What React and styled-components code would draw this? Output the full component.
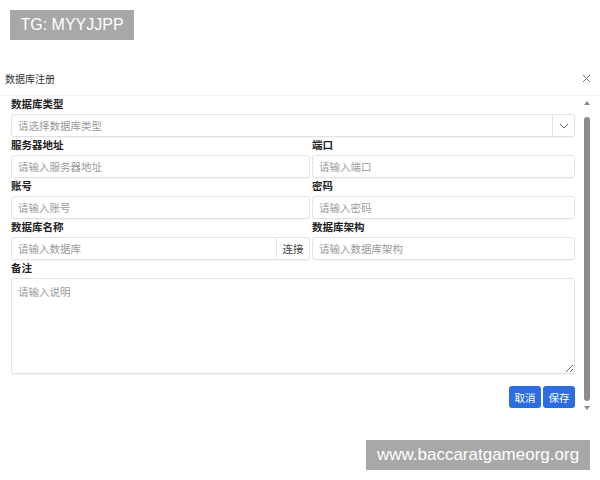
import styled, { createGlobalStyle } from "styled-components";

const GlobalStyle = createGlobalStyle`
    * { box-sizing: border-box; }
    body {
        margin: 0;
        background: #ffffff;
        font-family: "Liberation Sans", "Noto Sans CJK SC", sans-serif;
    }
`;

const cjk = `"Liberation Sans", "Noto Sans CJK SC", sans-serif`;

const fields = [
    [
        { label: "服务器地址", placeholder: "请输入服务器地址" },
        { label: "端口", placeholder: "请输入端口" },
    ],
    [
        { label: "账号", placeholder: "请输入账号" },
        { label: "密码", placeholder: "请输入密码" },
    ],
];

const App = () => {
    return (
        <Page>
            <GlobalStyle />
            <Badge top="10px" left="10px" width="124px">TG: MYYJJPP</Badge>
            <Dialog>
                <Header>
                    <Title>数据库注册</Title>
                    <Close>
                        <svg width="9" height="9" viewBox="0 0 9 9">
                            <path d="M1 1 L8 8 M8 1 L1 8" stroke="#666" strokeWidth="0.9" />
                        </svg>
                    </Close>
                </Header>
                <Body>
                    <Content>
                        <Group>
                            <Label>数据库类型</Label>
                            <SelectBox>
                                <SelectText>请选择数据库类型</SelectText>
                                <Chevron>
                                    <svg width="10" height="6" viewBox="0 0 10 6">
                                        <path d="M1 1 L5 5 L9 1" stroke="#666" strokeWidth="1" fill="none" />
                                    </svg>
                                </Chevron>
                            </SelectBox>
                        </Group>
                        {fields.map((row, i) => (
                            <Row key={i}>
                                {row.map((f) => (
                                    <Group key={f.label}>
                                        <Label>{f.label}</Label>
                                        <Input placeholder={f.placeholder} />
                                    </Group>
                                ))}
                            </Row>
                        ))}
                        <Row>
                            <Group>
                                <Label>数据库名称</Label>
                                <InputGroup>
                                    <GroupInput placeholder="请输入数据库" />
                                    <AddonBtn>连接</AddonBtn>
                                </InputGroup>
                            </Group>
                            <Group>
                                <Label>数据库架构</Label>
                                <Input placeholder="请输入数据库架构" />
                            </Group>
                        </Row>
                        <Group>
                            <Label>备注</Label>
                            <TextArea placeholder="请输入说明" />
                        </Group>
                        <Footer>
                            <Btn>取消</Btn>
                            <Btn>保存</Btn>
                        </Footer>
                    </Content>
                    <ScrollBar>
                        <Arrow up />
                        <Thumb />
                        <Arrow />
                    </ScrollBar>
                </Body>
            </Dialog>
            <Badge top="440px" left="366px" width="224px" fontSize="17px">www.baccaratgameorg.org</Badge>
        </Page>
    );
};

const Page = styled.div`
    position: relative;
    width: 600px;
    height: 480px;
    overflow: hidden;
    background: #fff;
`;

const Badge = styled.div`
    position: absolute;
    top: ${(p) => p.top};
    left: ${(p) => p.left};
    width: ${(p) => p.width};
    height: 30px;
    background: #a8a8a8;
    color: #fff;
    font-family: "Liberation Sans", sans-serif;
    font-size: ${(p) => p.fontSize || "16px"};
    display: flex;
    align-items: center;
    justify-content: center;
`;

const Dialog = styled.div`
    padding-top: 61px;
    display: flex;
    flex-direction: column;
`;

const Header = styled.div`
    height: 35px;
    padding: 0 8px 0 5px;
    display: flex;
    align-items: center;
    justify-content: space-between;
    border-bottom: 1px solid #f3f3f3;
`;

const Title = styled.div`
    font-family: ${cjk};
    font-size: 10px;
    color: #333;
`;

const Close = styled.div`
    width: 12px;
    height: 12px;
    display: flex;
    align-items: center;
    justify-content: center;
`;

const Body = styled.div`
    display: flex;
    padding: 0 6px 0 11px;
    gap: 5px;
    height: 318px;
`;

const Content = styled.div`
    width: 564px;
    display: flex;
    flex-direction: column;
`;

const Row = styled.div`
    display: grid;
    grid-template-columns: 299px 1fr;
    gap: 2px;
`;

const Group = styled.div`
    display: flex;
    flex-direction: column;
    min-width: 0;
`;

const Label = styled.div`
    height: 15px;
    line-height: 15px;
    margin: 1px 0 2px;
    font-family: ${cjk};
    font-size: 10.5px;
    font-weight: bold;
    color: #222;
`;

const fieldBase = `
    height: 23px;
    border: 1px solid #e3e3e3;
    border-radius: 3px;
    background: #fff;
    font-family: ${cjk};
    font-size: 10.5px;
    color: #333;
    outline: none;
    box-shadow: 0 1px 1px rgba(0,0,0,0.04);
    &::placeholder { color: #9a9a9a; }
`;

const Input = styled.input`
    ${fieldBase}
    width: 100%;
    padding: 0 6px;
`;

const SelectBox = styled.div`
    ${fieldBase}
    display: flex;
    align-items: center;
`;

const SelectText = styled.div`
    flex: 1;
    padding: 0 6px;
    color: #9a9a9a;
`;

const Chevron = styled.div`
    width: 22px;
    height: 100%;
    border-left: 1px solid #e3e3e3;
    display: flex;
    align-items: center;
    justify-content: center;
`;

const InputGroup = styled.div`
    display: flex;
`;

const GroupInput = styled.input`
    ${fieldBase}
    flex: 1;
    min-width: 0;
    padding: 0 6px;
    border-radius: 3px 0 0 3px;
`;

const AddonBtn = styled.div`
    ${fieldBase}
    width: 33px;
    border-left: none;
    border-radius: 0 3px 3px 0;
    display: flex;
    align-items: center;
    justify-content: center;
    color: #444;
`;

const TextArea = styled.textarea`
    ${fieldBase}
    height: 96px;
    padding: 5px 6px;
    resize: vertical;
`;

const Footer = styled.div`
    display: flex;
    justify-content: flex-end;
    gap: 2px;
    margin-top: 12px;
`;

const Btn = styled.button`
    width: 32px;
    height: 22px;
    padding: 0;
    border: none;
    border-radius: 3px;
    background: #2c6de3;
    color: #fff;
    font-family: ${cjk};
    font-size: 10.5px;
`;

const ScrollBar = styled.div`
    width: 14px;
    display: flex;
    flex-direction: column;
    align-items: center;
    padding: 5px 0 4px;
`;

const Arrow = styled.div`
    width: 0;
    height: 0;
    border-left: 3.5px solid transparent;
    border-right: 3.5px solid transparent;
    ${(p) => (p.up ? "border-bottom: 4px solid #8a8a8a;" : "border-top: 4px solid #8a8a8a;")}
    margin: ${(p) => (p.up ? "0 0 12px" : "5px 0 0")};
`;

const Thumb = styled.div`
    flex: 1;
    width: 6px;
    border-radius: 3px;
    background: #8c8c8c;
`;

export default App;
